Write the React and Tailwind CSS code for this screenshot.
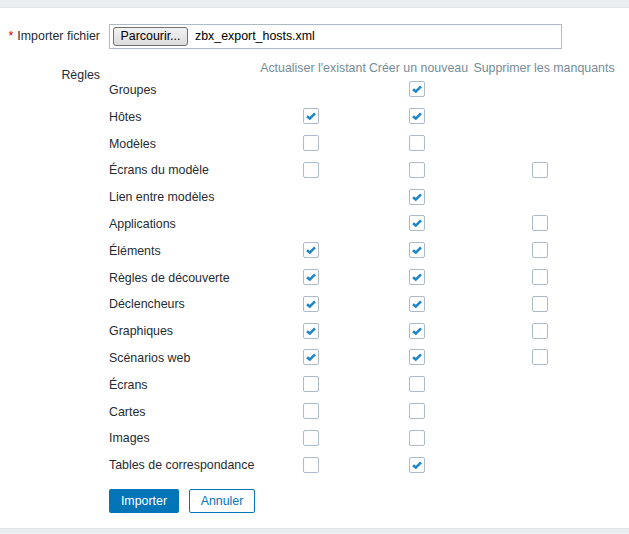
import React from 'react';

// 1 = coché, 0 = non coché, null = pas de case
const RULES = [
  { name: 'Groupes', cols: [null, 1, null] },
  { name: 'Hôtes', cols: [1, 1, null] },
  { name: 'Modèles', cols: [0, 0, null] },
  { name: 'Écrans du modèle', cols: [0, 0, 0] },
  { name: 'Lien entre modèles', cols: [null, 1, null] },
  { name: 'Applications', cols: [null, 1, 0] },
  { name: 'Éléments', cols: [1, 1, 0] },
  { name: 'Règles de découverte', cols: [1, 1, 0] },
  { name: 'Déclencheurs', cols: [1, 1, 0] },
  { name: 'Graphiques', cols: [1, 1, 0] },
  { name: 'Scénarios web', cols: [1, 1, 0] },
  { name: 'Écrans', cols: [0, 0, null] },
  { name: 'Cartes', cols: [0, 0, null] },
  { name: 'Images', cols: [0, 0, null] },
  { name: 'Tables de correspondance', cols: [0, 1, null] },
];

const Checkbox = ({ checked }) => (
  <span className="w-[16px] h-[16px] border border-[#acbbc7] rounded-[2px] bg-white flex items-center justify-center">
    {checked ? (
      <svg width="12" height="10" viewBox="0 0 12 10">
        <path d="M2 5.2 L4.8 7.6 L10 2.4" fill="none" stroke="#1f85c9" strokeWidth="2.6" />
      </svg>
    ) : null}
  </span>
);

const Cell = ({ value, className }) => (
  <div className={`flex items-center justify-center ${className}`}>
    {value === null ? null : <Checkbox checked={value === 1} />}
  </div>
);

export default function App() {
  return (
    <div className="h-[534px] w-[629px] flex flex-col bg-white text-[12.4px] text-[#1f2c33]" style={{ fontFamily: '"Liberation Sans", Arial, sans-serif' }}>
      <div className="h-[8px] bg-[#ebeef0] border-b border-[#dfe4e7]"></div>

      <div className="flex-1 pt-[16px]">
        <div className="grid grid-cols-[100px_1fr] gap-x-[9px]">
          {/* Fichier */}
          <div className="flex items-center justify-end h-[25px]">
            <span className="text-[#d40000] mr-[4px]">*</span>
            <span>Importer fichier</span>
          </div>
          <div className="w-[453px] h-[25px] border border-[#acbbc7] flex items-center pl-[3px]">
            <span className="h-[19px] w-[75px] border border-[#707070] rounded-[3px] bg-gradient-to-b from-[#f2f2f2] to-[#dcdcdc] flex items-center justify-center text-black">
              Parcourir...
            </span>
            <span className="ml-[7px] text-black">zbx_export_hosts.xml</span>
          </div>

          {/* Règles */}
          <div className="mt-[11px] pt-[7px] leading-[16px] text-right">Règles</div>
          <div className="mt-[11px]">
            <div className="flex h-[16px] leading-[16px] text-[#768d99]">
              <div className="w-[150px]"></div>
              <div className="w-[108px] text-center whitespace-nowrap">Actualiser l'existant</div>
              <div className="w-[103px] text-center whitespace-nowrap">Créer un nouveau</div>
              <div className="w-[148px] text-center whitespace-nowrap">Supprimer les manquants</div>
            </div>
            {RULES.map((r) => (
              <div key={r.name} className="flex items-center h-[26.8px]">
                <div className="w-[150px] whitespace-nowrap pt-[2px]">{r.name}</div>
                <Cell value={r.cols[0]} className="w-[108px] pr-[4px]" />
                <Cell value={r.cols[1]} className="w-[103px] pr-[3px]" />
                <Cell value={r.cols[2]} className="w-[148px] pr-[8px]" />
              </div>
            ))}

            <div className="flex gap-[10px] mt-[11px]">
              <button className="w-[70px] h-[24px] bg-[#0275b8] text-white rounded-[2px]">Importer</button>
              <button className="w-[66px] h-[24px] border border-[#0275b8] text-[#0275b8] bg-white rounded-[2px]">Annuler</button>
            </div>
          </div>
        </div>
      </div>

      <div className="h-[6px] bg-[#ebeef0] border-t border-[#dfe4e7]"></div>
    </div>
  );
}
